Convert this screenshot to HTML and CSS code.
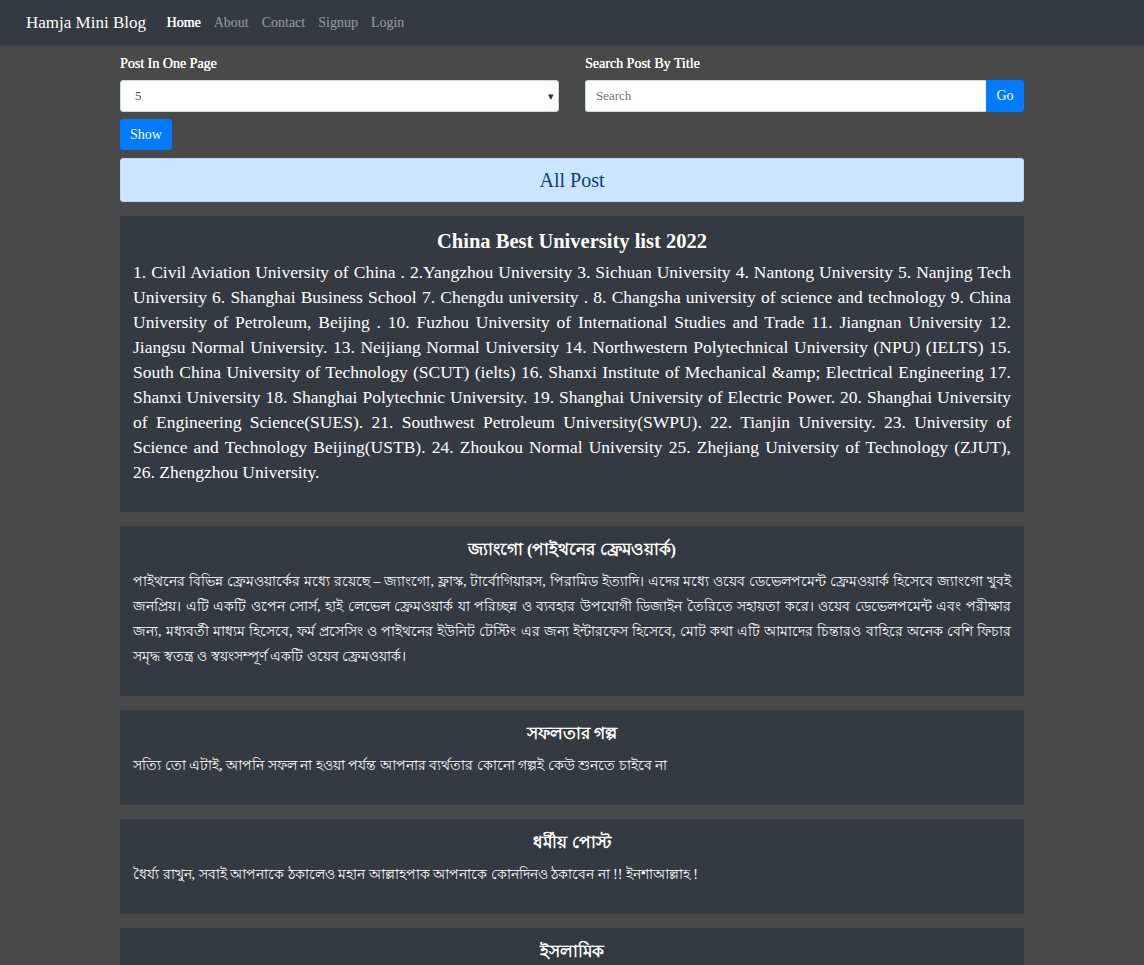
FILE: index.html
```html
<!DOCTYPE html>
<html lang="en">
<head>
<meta charset="utf-8">
<title>Hamja Mini Blog</title>
<link rel="stylesheet" href="styles.css">
</head>
<body>
<nav class="navbar">
  <a class="brand" href="#">Hamja Mini Blog</a>
  <ul class="nav-links">
    <li><a class="active" href="#">Home</a></li>
    <li><a href="#">About</a></li>
    <li><a href="#">Contact</a></li>
    <li><a href="#">Signup</a></li>
    <li><a href="#">Login</a></li>
  </ul>
</nav>
<main class="container">
  <div class="controls">
    <div class="field">
      <label class="label">Post In One Page</label>
      <div class="select">
        <span>5</span>
        <span class="caret">&#9662;</span>
      </div>
      <div><button class="btn">Show</button></div>
    </div>
    <div class="field">
      <label class="label">Search Post By Title</label>
      <div class="search">
        <input class="search-input" type="text" placeholder="Search">
        <button class="btn go">Go</button>
      </div>
    </div>
  </div>
  <div class="alert">All Post</div>

  <article class="post">
    <h2 class="post-title">China Best University list 2022</h2>
    <p class="post-body">1. Civil Aviation University of China . 2.Yangzhou University 3. Sichuan University 4. Nantong University 5. Nanjing Tech University 6. Shanghai Business School 7. Chengdu university . 8. Changsha university of science and technology 9. China University of Petroleum, Beijing . 10. Fuzhou University of International Studies and Trade 11. Jiangnan University 12. Jiangsu Normal University. 13. Neijiang Normal University 14. Northwestern Polytechnical University (NPU) (IELTS) 15. South China University of Technology (SCUT) (ielts) 16. Shanxi Institute of Mechanical &amp;amp; Electrical Engineering 17. Shanxi University 18. Shanghai Polytechnic University. 19. Shanghai University of Electric Power. 20. Shanghai University of Engineering Science(SUES). 21. Southwest Petroleum University(SWPU). 22. Tianjin University. 23. University of Science and Technology Beijing(USTB). 24. Zhoukou Normal University 25. Zhejiang University of Technology (ZJUT), 26. Zhengzhou University.</p>
  </article>

  <article class="post bn">
    <h2 class="post-title">জ্যাংগো (পাইথনের ফ্রেমওয়ার্ক)</h2>
    <p class="post-body">পাইথনের বিভিন্ন ফ্রেমওয়ার্কের মধ্যে রয়েছে – জ্যাংগো, ফ্লাস্ক, টার্বোগিয়ারস, পিরামিড ইত্যাদি। এদের মধ্যে ওয়েব ডেভেলপমেন্ট ফ্রেমওয়ার্ক হিসেবে জ্যাংগো খুবই জনপ্রিয়। এটি একটি ওপেন সোর্স, হাই লেভেল ফ্রেমওয়ার্ক যা পরিচ্ছন্ন ও ব্যবহার উপযোগী ডিজাইন তৈরিতে সহায়তা করে। ওয়েব ডেভেলপমেন্ট এবং পরীক্ষার জন্য, মধ্যবর্তী মাধ্যম হিসেবে, ফর্ম প্রসেসিং ও পাইথনের ইউনিট টেস্টিং এর জন্য ইন্টারফেস হিসেবে, মোট কথা এটি আমাদের চিন্তারও বাহিরে অনেক বেশি ফিচার সমৃদ্ধ স্বতন্ত্র ও স্বয়ংসম্পূর্ণ একটি ওয়েব ফ্রেমওয়ার্ক।</p>
  </article>

  <article class="post bn">
    <h2 class="post-title">সফলতার গল্প</h2>
    <p class="post-body">সত্যি তো এটাই, আপনি সফল না হওয়া পর্যন্ত আপনার ব্যর্থতার কোনো গল্পই কেউ শুনতে চাইবে না</p>
  </article>

  <article class="post bn">
    <h2 class="post-title">ধর্মীয় পোস্ট</h2>
    <p class="post-body">ধৈর্য্য রাখুন, সবাই আপনাকে ঠকালেও মহান আল্লাহপাক আপনাকে কোনদিনও ঠকাবেন না !! ইনশাআল্লাহ !</p>
  </article>

  <article class="post bn">
    <h2 class="post-title">ইসলামিক</h2>
    <p class="post-body">আল্লাহ তায়ালা ধৈর্যশীলদের সাথে আছেন।</p>
  </article>
</main>
</body>
</html>
```
FILE: styles.css
```css
* { box-sizing: border-box; }
html, body { margin: 0; padding: 0; }
body {
  background: #494949;
  font-family: "Liberation Serif", "Times New Roman", serif;
  color: #fff;
  font-size: 16px;
}
.navbar {
  background: #343a40;
  height: 46px;
  display: flex;
  align-items: center;
  padding: 0 26px;
  border-bottom: 1px solid #3d4248;
}
.brand {
  color: #fff;
  text-decoration: none;
  font-size: 17px;
  margin-right: 14px;
}
.nav-links {
  list-style: none;
  margin: 0;
  padding: 0;
  display: flex;
}
.nav-links a {
  display: block;
  padding: 0 6.5px;
  font-size: 14px;
  color: rgba(255,255,255,0.5);
  text-decoration: none;
}
.nav-links a.active {
  color: #fff;
  text-shadow: 0.4px 0 0 #fff;
}
.container {
  width: 904px;
  margin: 0 auto;
  padding-top: 9px;
}
.controls {
  display: grid;
  grid-template-columns: 1fr 1fr;
  column-gap: 26px;
}
.field { display: flex; flex-direction: column; }
.label {
  font-size: 14px;
  line-height: 18px;
  margin-bottom: 7px;
  color: #fff;
  text-shadow: 0.2px 0 0 #fff;
}
.select {
  height: 32px;
  background: #fff;
  border: 1px solid #ced4da;
  border-radius: 3px;
  display: flex;
  align-items: center;
  justify-content: space-between;
  padding: 0 4px 0 14px;
  color: #495057;
  font-size: 13px;
}
.caret { color: #333; font-size: 11px; }
.btn {
  font-family: inherit;
  background: #007bff;
  color: #fff;
  border: none;
  border-radius: 3px;
  font-size: 14px;
  height: 31px;
  padding: 0 10px;
  margin-top: 7px;
}
.search { display: flex; height: 32px; }
.search-input {
  flex: 1;
  border: 1px solid #ced4da;
  border-right: none;
  border-radius: 3px 0 0 3px;
  font-family: inherit;
  font-size: 13px;
  padding: 0 10px;
  color: #495057;
  outline: none;
}
.search-input::placeholder { color: #6c757d; }
.btn.go {
  margin-top: 0;
  height: 32px;
  width: 38px;
  padding: 0;
  border-radius: 0 3px 3px 0;
}
.alert {
  margin-top: 8px;
  background: #cce5ff;
  border: 1px solid #b8daff;
  border-radius: 3px;
  color: #004085;
  text-align: center;
  font-size: 20px;
  height: 44px;
  line-height: 42px;
}
.post {
  background: #343a40;
  margin-top: 14px;
  padding: 13px 13px 13px;
}
.post-title {
  margin: 0 0 7px;
  text-align: center;
  font-size: 20.5px;
  line-height: 24px;
  font-weight: bold;
}
.post-body {
  margin: 0 0 14px;
  font-size: 17.5px;
  line-height: 25px;
  text-align: justify;
}
.bn .post-title {
  font-size: 16.5px;
  line-height: 22px;
  margin-bottom: 8px;
}
.bn .post-body {
  font-size: 14px;
}
```
